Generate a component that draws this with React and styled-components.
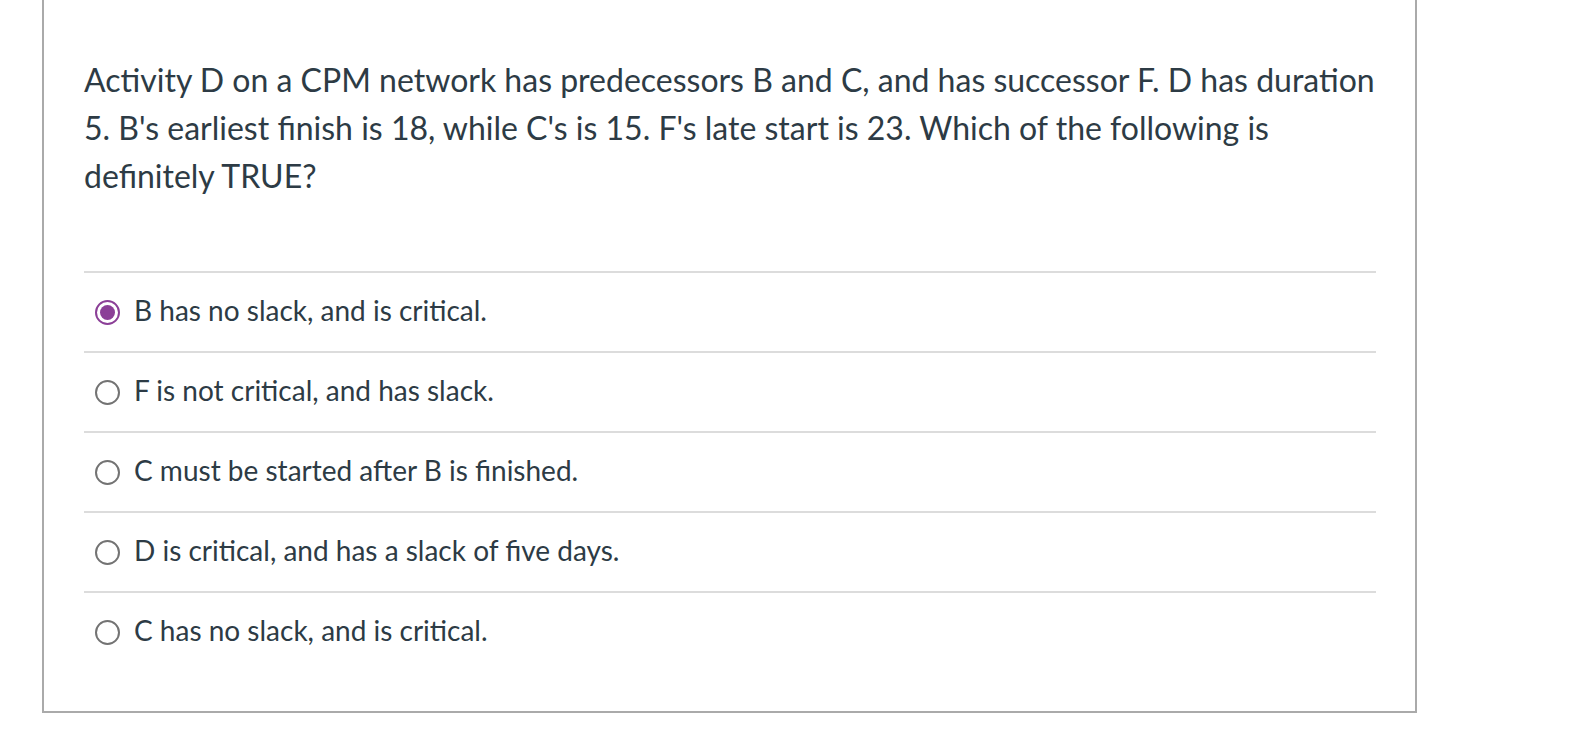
import React, { useState } from "react";
import styled, { createGlobalStyle } from "styled-components";

const GlobalStyle = createGlobalStyle`
  body {
    margin: 0;
    background: #ffffff;
    font-family: Lato, "Liberation Sans", sans-serif;
  }
`;

const Card = styled.div`
  box-sizing: border-box;
  width: 1375px;
  margin-left: 42px;
  margin-top: -2px;
  border: 2px solid #aaaaaa;
  padding: 56px 39px 40px 40px;
  background: #fff;
`;

const Question = styled.p`
  margin: 0;
  font-size: 32px;
  line-height: 48px;
  color: #2d3b45;
`;

const Answers = styled.div`
  margin-top: 71px;
  display: flex;
  flex-direction: column;
`;

const Row = styled.label`
  display: flex;
  align-items: center;
  gap: 14px;
  height: 73px;
  padding: 0 0 5px 11px;
  border-top: 2px solid #dcdcdc;
  cursor: pointer;
  font-size: 28px;
  color: #2d3b45;
`;

const Radio = styled.span`
  box-sizing: border-box;
  width: 25px;
  height: 25px;
  border-radius: 50%;
  border: 2px solid ${(p) => (p.checked ? "#8b3f97" : "#737373")};
  display: flex;
  align-items: center;
  justify-content: center;
  flex-shrink: 0;
  margin-top: 5px;

  &::after {
    content: "";
    width: 15px;
    height: 15px;
    border-radius: 50%;
    background: #8b3f97;
    display: ${(p) => (p.checked ? "block" : "none")};
  }
`;

const options = [
  "B has no slack, and is critical.",
  "F is not critical, and has slack.",
  "C must be started after B is finished.",
  "D is critical, and has a slack of five days.",
  "C has no slack, and is critical.",
];

export default function App() {
  const [selected, setSelected] = useState(0);
  return (
    <>
      <GlobalStyle />
      <Card>
        <Question>
          Activity D on a CPM network has predecessors B and C, and has successor F. D has duration
          5. B's earliest finish is 18, while C's is 15. F's late start is 23. Which of the following is
          definitely TRUE?
        </Question>
        <Answers>
          {options.map((o, i) => (
            <Row key={o} onClick={() => setSelected(i)}>
              <Radio checked={selected === i} />
              {o}
            </Row>
          ))}
        </Answers>
      </Card>
    </>
  );
}
